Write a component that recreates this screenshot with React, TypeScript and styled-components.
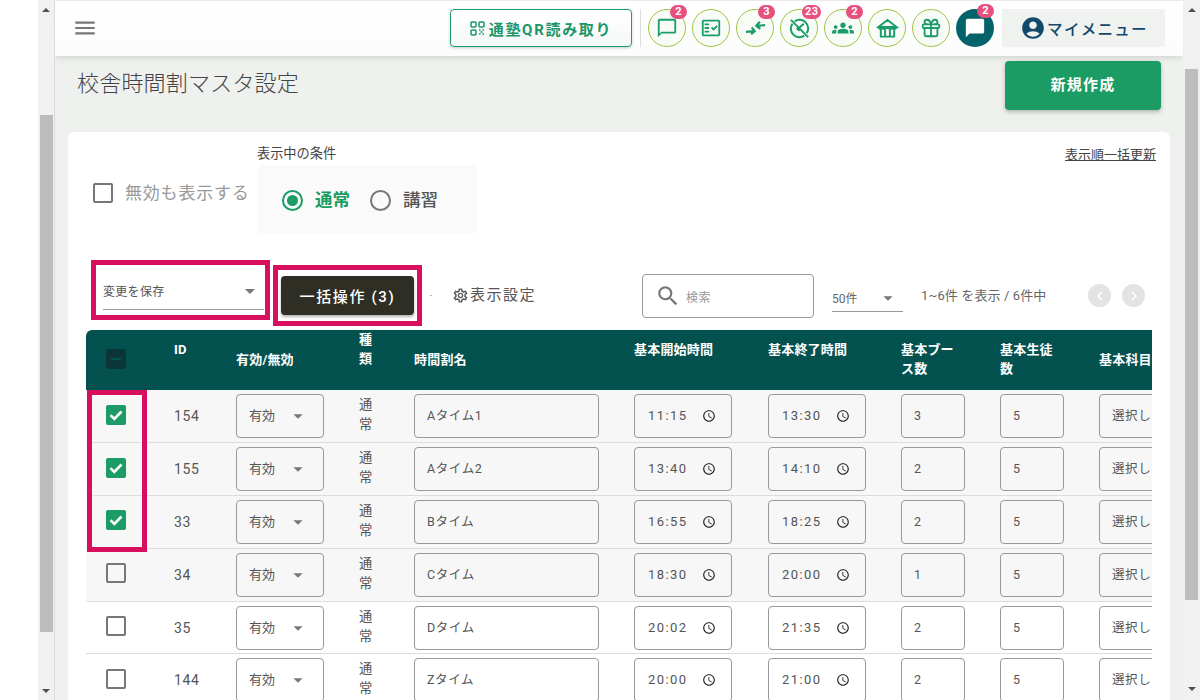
import React from 'react';
import styled, { createGlobalStyle } from 'styled-components';
import {
  MdMenu, MdOutlineChatBubbleOutline, MdOutlineFactCheck, MdGroups, MdChatBubble, MdAccountCircle,
  MdOutlineSettings, MdArrowDropDown, MdSearch, MdChevronLeft, MdChevronRight, MdOutlineAccessTime,
} from 'react-icons/md';
import { Gift } from 'lucide-react';

const Global = createGlobalStyle`
  html, body { margin: 0; padding: 0; height: 700px; overflow: hidden; background: #fff; }
  body, button, input { font-family: Roboto, "Noto Sans CJK JP", sans-serif; }
  #root { height: 700px; }
`;

const Page = styled.div`display: flex; position: relative; height: 700px; overflow: hidden; background: #fff;`;
const Gutter = styled.div`width: 38px; flex: none;`;
const Scrollbar = styled.div`
  width: 17px; flex: none; background: #f1f1f1; display: flex; flex-direction: column; align-items: center;
  border-right: 1px solid #dcdcdc; box-sizing: border-box;
`;
const ScrollArrow = styled.div<{ $down?: boolean; $gap?: number }>`
  width: 0; height: 0; flex: none; border-left: 4px solid transparent; border-right: 4px solid transparent;
  ${p => p.$down ? `border-top: 4px solid #505050; margin-top: ${p.$gap}px;` : 'border-bottom: 4px solid #505050; margin-top: 8px;'}
`;
const ScrollThumb = styled.div<{ $top: number; $height: number }>`
  width: 13px; flex: none; background: #bdbdbd; margin-top: ${p => p.$top}px; height: ${p => p.$height}px;
`;
const Main = styled.main`flex: 1; min-width: 0; background: #eef1ee; display: flex; flex-direction: column; overflow: hidden;`;
const RightBar = styled(Scrollbar)`border-right: none; width: 17px; background: #f1f1f1;`;

const Topbar = styled.header`
  height: 55px; flex: none; margin-top: 1px; background: linear-gradient(#fff, #fbfcfb); box-shadow: 0 2px 6px rgba(0,0,0,.12); box-sizing: border-box;
  display: flex; align-items: center; padding: 0 18px 1px 17px; position: relative; z-index: 2;
`;
const MenuBtn = styled.div`color: #777; display: flex;`;
const Spacer = styled.div`flex: 1;`;
const QrButton = styled.button`
  width: 182px; height: 38px; background: linear-gradient(#fff, #f5f8f6); border: 1px solid #1a9c74; border-radius: 4px;
  box-shadow: 0 1px 3px rgba(0,0,0,.2); color: #1a9668; font-size: 15px; font-weight: 700; letter-spacing: 1.7px;
  display: flex; align-items: center; justify-content: center; gap: 4px; padding: 0;
`;
const Divider = styled.div`width: 1px; height: 38px; background: #ddd; margin: 0 7px 0 8px;`;
const Circles = styled.div`display: flex; gap: 6px;`;
const Circle = styled.div<{ $dark?: boolean }>`
  width: 38px; height: 38px; box-sizing: border-box; border-radius: 50%; position: relative; display: flex; align-items: center; justify-content: center;
  background: ${p => p.$dark ? '#03636a' : '#f8fbf6'}; border: ${p => p.$dark ? 'none' : '1.2px solid #9cc645'};
  color: ${p => p.$dark ? '#fff' : '#1a9c6c'};
`;
const Badge = styled.span`
  position: absolute; left: 21px; top: -5px; height: 14px; min-width: 17px; padding: 0 3px; box-sizing: border-box; border-radius: 7px; background: #e8507e; color: #fff;
  font-size: 11px; font-weight: 700; line-height: 14px; text-align: center; letter-spacing: .4px;
`;
const MyMenu = styled.div`
  width: 163px; height: 38px; background: #eff2ef; border-radius: 2px; margin-left: 8px; box-sizing: border-box; padding: 0 0 1px 1px; display: flex; align-items: center; justify-content: center; gap: 1px;
  color: #11486b; font-size: 15.5px; font-weight: 500; letter-spacing: 1.3px;
`;

const Content = styled.div`padding: 0 13px; flex: 1;`;
const TitleRow = styled.div`display: flex; justify-content: space-between; padding: 5px 9px 0; height: 76px; box-sizing: border-box;`;
const Title = styled.h1`margin: 9px 0 0; font-size: 22px; line-height: 28px; font-weight: 300; color: #444; letter-spacing: .2px;`;
const NewButton = styled.button`
  width: 156px; height: 49px; background: #1a9c64; color: #fff; border: 0; border-radius: 4px; font-size: 15px; font-weight: 700; letter-spacing: 1.3px;
  box-shadow: 0 2px 4px rgba(0,0,0,.25); padding: 0 0 4px;
`;
const Card = styled.section`background: #fff; border-radius: 6px 6px 0 0; padding: 14px 18px 0; height: 600px;`;
const FilterRow = styled.div`display: flex; align-items: flex-start; justify-content: space-between;`;
const FilterLeft = styled.div`display: flex;`;
const ShowInvalid = styled.label`display: flex; align-items: center; gap: 12px; margin: 37px 0 0 7px; height: 20px; width: 155px; color: #999; font-size: 17px; letter-spacing: .8px; line-height: 20px; white-space: nowrap;`;
const Conditions = styled.div`margin-left: 9px;`;
const CondLabel = styled.div`font-size: 13.2px; line-height: 14px; color: #444; margin: 0 0 5px; padding-top: 1px; height: 13px;`;
const CondBox = styled.div`width: 220px; height: 69px; box-sizing: border-box; background: #fafafa; border-radius: 6px; display: flex; align-items: center; padding: 1px 0 0 25px;`;
const Radio = styled.span<{ $on?: boolean }>`
  width: 21px; height: 21px; box-sizing: border-box; border-radius: 50%; border: 2px solid ${p => p.$on ? '#1a9c64' : '#777'}; display: flex; align-items: center; justify-content: center; flex: none;
  &::after { content: ''; width: 11px; height: 11px; border-radius: 50%; background: ${p => p.$on ? '#1a9c64' : 'transparent'}; }
`;
const RadioText = styled.span<{ $on?: boolean }>`
  margin: 0 20px 3px 12px; font-size: 17.5px; font-weight: ${p => p.$on ? 700 : 500}; color: ${p => p.$on ? '#1a9c64' : '#555'};
`;
const SortLink = styled.a`font-size: 13px; color: #444; text-decoration: underline; margin: 2px -4px 0 0; line-height: 14px;`;

const Toolbar = styled.div`display: flex; align-items: flex-start; height: 60px; margin-top: 36px; padding-left: 17px; & > * { flex: none; }`;
const BulkSelect = styled.div`
  width: 161px; height: 40px; box-sizing: border-box; border-bottom: 1px solid #999; display: flex; align-items: center; justify-content: space-between;
  font-size: 12px; color: #555; letter-spacing: .3px; padding: 2px 2px 0 0;
`;
const Caret = styled(MdArrowDropDown)`color: #777; flex: none;`;
const BulkButton = styled.button`
  width: 133px; height: 39px; margin: 6px 0 0 17px; border: 0; border-radius: 4px; background: #2e2e25; color: #fff; font-size: 15px; letter-spacing: 1.65px; font-weight: 500;
  box-shadow: 0 2px 3px rgba(0,0,0,.3); padding: 0;
`;
const Dot = styled.span`width: 2px; height: 1px; background: #bbb; margin: 25px 0 0 16px;`;
const DisplaySetting = styled.div`
  display: flex; align-items: center; margin: 14px 0 0 20px; width: 190px; font-size: 15px; line-height: 22px; color: #555; letter-spacing: 1.5px; gap: 1px; height: 22px;
`;
const SearchBox = styled.div`
  width: 158px; height: 42px; margin-top: 4px; border: 1px solid #999; border-radius: 4px; display: flex; align-items: center; gap: 5px;
  padding-left: 12px; color: #999; font-size: 12px; letter-spacing: .4px;
`;
const SearchIcon = styled(MdSearch)`color: #777; flex: none;`;
const PerPage = styled.div`
  width: 71px; height: 38px; margin: 4px 0 0 18px; box-sizing: border-box; border-bottom: 1px solid #999; display: flex; align-items: center; justify-content: space-between; padding: 10px 4px 0 0;
  font-size: 12px; color: #666;
`;
const PageInfo = styled.div`font-size: 13px; color: #666; margin: 19px 0 0 18px; width: 167px; line-height: 14px; letter-spacing: .12px; white-space: nowrap;`;
const NavCircle = styled.div`
  width: 23px; height: 23px; border-radius: 50%; background: #e3e3e3; color: #fff; display: flex; align-items: center; justify-content: center; margin: 14px 11px 0 0;
`;

const TableWrap = styled.div`width: 1066px; overflow: hidden; border-radius: 6px 0 0 0;`;
const Table = styled.table`width: 1280px; table-layout: fixed; border-collapse: collapse;`;
const HeadRow = styled.tr`height: 60px; background: #04524f;`;
const Th = styled.th<{ $up?: boolean; $right?: number }>`
  text-align: left; padding: 0 ${p => p.$right ?? 14}px ${p => p.$up ? 22 : 2}px 14px; font-size: 13px; line-height: 19px; font-weight: 700; color: #fff; vertical-align: middle; letter-spacing: .2px;
`;
const Row = styled.tr<{ $shade?: boolean }>`height: 52.8px; background: ${p => p.$shade ? '#f7f7f7' : '#fff'}; border-bottom: 1px solid #ddd;`;
const Td = styled.td`padding: 0 14px; font-size: 14px; line-height: 20px; color: #555; vertical-align: middle; letter-spacing: .6px; overflow: hidden; white-space: nowrap;`;
const KindCell = styled(Td)`white-space: normal; padding: 0 16px 2px 14px; font-size: 13.3px; letter-spacing: 0;`;
const CheckCell = styled.td`padding: 0 0 0 21px;`;
const CheckHeadCell = styled.th`padding: 0 0 2px 21px; text-align: left;`;
const Check = styled.span<{ $on?: boolean }>`
  width: 20px; height: 20px; box-sizing: border-box; display: flex; align-items: center; justify-content: center; border-radius: 2px; color: #fff; flex: none;
  background: ${p => p.$on ? '#1a9c64' : 'transparent'}; border: ${p => p.$on ? '0' : '2px solid #777'};
`;
const RowCheck = styled(Check)`margin: 0 0 3px -1px;`;
const IndetCheck = styled.span`
  width: 20px; height: 20px; margin-left: -1px; display: flex; align-items: center; justify-content: center; background: #0b3639; border-radius: 2px;
  &::after { content: ''; width: 10px; height: 2px; background: #04524f; }
`;
const Field = styled.div<{ $w: number }>`
  width: ${p => p.$w}px; height: 44px; box-sizing: border-box; border: 1px solid #999; border-radius: 4px; display: flex; align-items: center; padding: 0 12px; font-size: 12.5px; color: #555; letter-spacing: .6px; white-space: nowrap; overflow: hidden; background: transparent;
`;
const StatusField = styled(Field)`justify-content: space-between; padding-right: 14px; font-size: 13px; letter-spacing: 0;`;
const TimeField = styled(Field)`justify-content: space-between; padding: 0 15px 0 13px; letter-spacing: 1.4px; font-size: 13px;`;
const ClockIcon = styled(MdOutlineAccessTime)`color: #222; flex: none;`;

const Mark = styled.div<{ $l: number; $t: number; $w: number; $h: number }>`
  position: absolute; left: ${p => p.$l}px; top: ${p => p.$t}px; width: ${p => p.$w}px; height: ${p => p.$h}px; box-sizing: border-box; border: 5px solid #d80f5e; pointer-events: none; z-index: 5;
`;

const Tick = () => (
  <svg width="20" height="20" viewBox="0 0 20 20" fill="none" stroke="#fff" strokeWidth="2.6"><path d="M4.500 10.200l3.800 3.800 7.200-7.500" /></svg>
);
const QrIcon = () => (
  <svg width="15" height="15" viewBox="0 0 15 15" fill="none" stroke="currentColor" strokeWidth="1.5">
    <rect x="1" y="1" width="5" height="5" rx="1" /><rect x="9" y="1" width="5" height="5" rx="1" /><rect x="1" y="9" width="5" height="5" rx="1" />
    <path d="M9 9h1.500M12.500 9H14M10.500 11h2M9 13h1.500M12.500 13H14" />
  </svg>
);
const Compress = () => (
  <svg width="23" height="23" viewBox="0 0 24 24" fill="none" stroke="currentColor" strokeWidth="2.3"><path d="M2 15.500l9-.8M8 11l3.200 3.700L7.500 18M22 8.500l-9 .8M16.500 5L12.800 9.300 17 12.500" /></svg>
);
const NoCheck = () => (
  <svg width="23" height="23" viewBox="0 0 24 24" fill="none" stroke="currentColor" strokeWidth="2.100"><path d="M7 4.500A9 9 0 0 1 19.500 17M17 19.500A9 9 0 0 1 4.500 7M3 3l18 18M9 11.500l3 3M11.500 11.500l5-4.500" /></svg>
);
const Bank = () => (
  <svg width="23" height="23" viewBox="0 0 24 24" fill="none" stroke="currentColor" strokeWidth="2"><path d="M2.500 10.500L12 3l9.500 7.500zM3 11c0 2 4 2 4 0 0 2 3 2 5 0 2 2 5 2 5 0 0 2 4 2 4 0M5 13v7.500h14V13M9.500 13.500v7M14.500 13.500v7" /></svg>
);

const rows = [
  { id: '154', on: true, name: 'Aタイム1', s: '11:15', e: '13:30', b: '3' },
  { id: '155', on: true, name: 'Aタイム2', s: '13:40', e: '14:10', b: '2' },
  { id: '33', on: true, name: 'Bタイム', s: '16:55', e: '18:25', b: '2' },
  { id: '34', on: false, name: 'Cタイム', s: '18:30', e: '20:00', b: '1' },
  { id: '35', on: false, name: 'Dタイム', s: '20:02', e: '21:35', b: '2' },
  { id: '144', on: false, name: 'Zタイム', s: '20:00', e: '21:00', b: '2' },
];
const widths = [74, 62, 123, 55, 220, 134, 133, 99, 99, 281];

export default function App() {
  return (
    <Page>
      <Global />
      <Gutter />
      <Scrollbar>
        <ScrollArrow />
        <ScrollThumb $top={103} $height={517} />
        <ScrollArrow $down $gap={57} />
      </Scrollbar>
      <Main>
        <Topbar>
          <MenuBtn><MdMenu size={26} /></MenuBtn>
          <Spacer />
          <QrButton><QrIcon />通塾QR読み取り</QrButton>
          <Divider />
          <Circles>
            <Circle><MdOutlineChatBubbleOutline size={22} /><Badge>2</Badge></Circle>
            <Circle><MdOutlineFactCheck size={22} /></Circle>
            <Circle><Compress /><Badge>3</Badge></Circle>
            <Circle><NoCheck /><Badge>23</Badge></Circle>
            <Circle><MdGroups size={22} /><Badge>2</Badge></Circle>
            <Circle><Bank /></Circle>
            <Circle><Gift size={22} strokeWidth={2} /></Circle>
            <Circle $dark><MdChatBubble size={22} /><Badge>2</Badge></Circle>
          </Circles>
          <MyMenu><MdAccountCircle size={26} />マイメニュー</MyMenu>
        </Topbar>
        <Content>
          <TitleRow>
            <Title>校舎時間割マスタ設定</Title>
            <NewButton>新規作成</NewButton>
          </TitleRow>
          <Card>
            <FilterRow>
              <FilterLeft>
                <ShowInvalid><Check />無効も表示する</ShowInvalid>
                <Conditions>
                  <CondLabel>表示中の条件</CondLabel>
                  <CondBox>
                    <Radio $on /><RadioText $on>通常</RadioText>
                    <Radio /><RadioText>講習</RadioText>
                  </CondBox>
                </Conditions>
              </FilterLeft>
              <SortLink>表示順一括更新</SortLink>
            </FilterRow>
            <Toolbar>
              <BulkSelect>変更を保存<Caret size={24} /></BulkSelect>
              <BulkButton>一括操作 (3)</BulkButton>
              <Dot />
              <DisplaySetting><MdOutlineSettings size={17} />表示設定</DisplaySetting>
              <SearchBox><SearchIcon size={26} />検索</SearchBox>
              <PerPage>50件<Caret size={22} /></PerPage>
              <PageInfo>1~6件 を表示 / 6件中</PageInfo>
              <NavCircle><MdChevronLeft size={18} /></NavCircle>
              <NavCircle><MdChevronRight size={18} /></NavCircle>
            </Toolbar>
            <TableWrap>
              <Table>
                <colgroup>{widths.map((w, i) => <col key={i} width={w} />)}</colgroup>
                <thead>
                  <HeadRow>
                    <CheckHeadCell><IndetCheck /></CheckHeadCell>
                    <Th $up>ID</Th>
                    <Th>有効/無効</Th>
                    <Th $up $right={16}>種類</Th>
                    <Th>時間割名</Th>
                    <Th $up>基本開始時間</Th>
                    <Th $up>基本終了時間</Th>
                    <Th $right={21}>基本ブース数</Th>
                    <Th $right={21}>基本生徒数</Th>
                    <Th>基本科目</Th>
                  </HeadRow>
                </thead>
                <tbody>
                  {rows.map((r, i) => (
                    <Row key={r.id} $shade={i < 4}>
                      <CheckCell><RowCheck $on={r.on}>{r.on && <Tick />}</RowCheck></CheckCell>
                      <Td>{r.id}</Td>
                      <Td><StatusField $w={88}>有効<Caret size={22} /></StatusField></Td>
                      <KindCell>通常</KindCell>
                      <Td><Field $w={185}>{r.name}</Field></Td>
                      <Td><TimeField $w={98}>{r.s}<ClockIcon size={14} /></TimeField></Td>
                      <Td><TimeField $w={98}>{r.e}<ClockIcon size={14} /></TimeField></Td>
                      <Td><Field $w={64}>{r.b}</Field></Td>
                      <Td><Field $w={64}>5</Field></Td>
                      <Td><Field $w={120}>選択してください</Field></Td>
                    </Row>
                  ))}
                </tbody>
              </Table>
            </TableWrap>
          </Card>
        </Content>
      </Main>
      <RightBar>
        <ScrollArrow />
        <ScrollThumb $top={57} $height={531} />
        <ScrollArrow $down $gap={87} />
      </RightBar>
      <Mark $l={91} $t={260} $w={179} $h={60} />
      <Mark $l={273} $t={265} $w={149} $h={61} />
      <Mark $l={87} $t={390} $w={60} $h={162} />
    </Page>
  );
}
